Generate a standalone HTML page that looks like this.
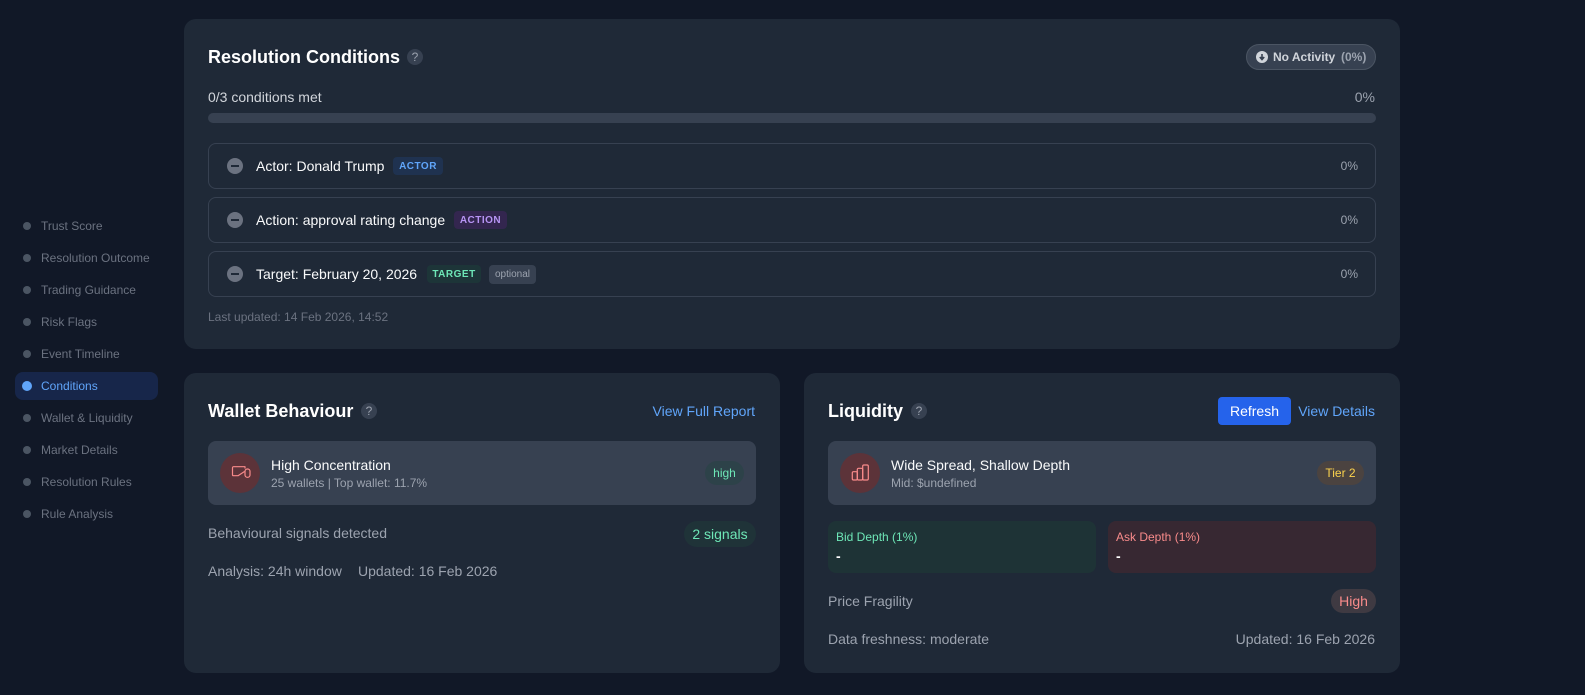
<!DOCTYPE html>
<html><head><meta charset="utf-8"><style>
html,body{margin:0;padding:0;width:1585px;height:695px;overflow:hidden;background:#111827;font-family:"Liberation Sans",sans-serif;color:#fff}
.a{position:absolute;white-space:nowrap}
.card{position:absolute;background:#1f2937;border-radius:12px}
.nav{position:absolute;left:41px;font-size:12px;line-height:16px;color:#6b7280}
.dot{position:absolute;left:23px;width:8px;height:8px;border-radius:50%;background:#4b5563}
h2{position:absolute;margin:0;font-size:18px;line-height:24px;font-weight:700;color:#fff;white-space:nowrap}
.q{position:absolute;width:16px;height:16px;border-radius:50%;background:#374151;color:#9ca3af;font-size:12px;line-height:16px;text-align:center}
.cond{position:absolute;left:208px;width:1166px;height:44px;border:1px solid #374151;border-radius:8px}
.mi{position:absolute;left:227px;width:16px;height:16px;border-radius:50%;background:#6b7280}
.mi:after{content:"";position:absolute;left:4px;top:7px;width:8px;height:2px;background:#1f2937}
.ct{position:absolute;left:256px;font-size:14px;line-height:20px;color:#f9fafb;white-space:nowrap}
.tag{position:absolute;height:18px;line-height:20px;font-size:10px;font-weight:700;letter-spacing:.5px;border-radius:4px;text-align:center}
.pc{position:absolute;right:227px;font-size:12px;line-height:16px;color:#9ca3af}
.box{position:absolute;top:441px;height:64px;background:#374151;border-radius:8px}
.ic{position:absolute;top:453px;width:40px;height:40px;border-radius:50%;background:#5c3339}
.pill{position:absolute;text-align:center;border-radius:12px;white-space:nowrap}
</style></head><body>

<div class="dot" style="top:222px"></div><div class="nav" style="top:218px">Trust Score</div>
<div class="dot" style="top:254px"></div><div class="nav" style="top:250px">Resolution Outcome</div>
<div class="dot" style="top:286px"></div><div class="nav" style="top:282px">Trading Guidance</div>
<div class="dot" style="top:318px"></div><div class="nav" style="top:314px">Risk Flags</div>
<div class="dot" style="top:350px"></div><div class="nav" style="top:346px">Event Timeline</div>
<div class="a" style="left:15px;top:372px;width:143px;height:28px;background:#17264a;border-radius:8px"></div>
<div class="dot" style="left:22px;top:381px;width:10px;height:10px;background:#60a5fa"></div><div class="nav" style="top:378px;color:#60a5fa">Conditions</div>
<div class="dot" style="top:414px"></div><div class="nav" style="top:410px">Wallet &amp; Liquidity</div>
<div class="dot" style="top:446px"></div><div class="nav" style="top:442px">Market Details</div>
<div class="dot" style="top:478px"></div><div class="nav" style="top:474px">Resolution Rules</div>
<div class="dot" style="top:510px"></div><div class="nav" style="top:506px">Rule Analysis</div>

<div class="card" style="left:184px;top:19px;width:1216px;height:330px"></div>
<h2 style="left:208px;top:45px">Resolution Conditions</h2>
<div class="q" style="left:407px;top:49px">?</div>
<div class="a" style="left:1246px;top:44px;width:128px;height:24px;background:#374151;border:1px solid #4b5563;border-radius:13px"></div>
<svg class="a" style="left:1256px;top:51px" width="12" height="12" viewBox="0 0 12 12"><circle cx="6" cy="6" r="6" fill="#d1d5db"/><path d="M6 3v5M3.8 6L6 8.500 8.200 6" stroke="#374151" stroke-width="1.600" fill="#374151"/></svg>
<div class="a" style="left:1273px;top:49px;font-size:12px;line-height:16px;font-weight:700;color:#d1d5db">No Activity</div>
<div class="a" style="left:1341px;top:49px;font-size:12px;line-height:16px;font-weight:700;color:#9ca3af">(0%)</div>

<div class="a" style="left:208px;top:87px;font-size:14px;line-height:20px;color:#d1d5db">0/3 conditions met</div>
<div class="a" style="right:210px;top:87px;font-size:14px;line-height:20px;color:#9ca3af">0%</div>
<div class="a" style="left:208px;top:113px;width:1168px;height:10px;border-radius:5px;background:#374151"></div>

<div class="cond" style="top:143px"></div>
<div class="mi" style="top:158px"></div>
<div class="ct" style="top:156px">Actor: Donald Trump</div>
<div class="tag" style="left:393px;top:157px;width:50px;color:#60a5fa;background:#1f3250">ACTOR</div>
<div class="pc" style="top:158px">0%</div>

<div class="cond" style="top:197px"></div>
<div class="mi" style="top:212px"></div>
<div class="ct" style="top:210px">Action: approval rating change</div>
<div class="tag" style="left:454px;top:211px;width:53px;color:#b794f4;background:#33264f">ACTION</div>
<div class="pc" style="top:212px">0%</div>

<div class="cond" style="top:251px"></div>
<div class="mi" style="top:266px"></div>
<div class="ct" style="top:264px">Target: February 20, 2026</div>
<div class="tag" style="left:427px;top:265px;width:54px;color:#6ee7b7;background:#1d3538">TARGET</div>
<div class="tag" style="left:489px;top:265px;width:47px;height:19px;line-height:19px;font-weight:400;letter-spacing:0;color:#9ca3af;background:#374151">optional</div>
<div class="pc" style="top:266px">0%</div>

<div class="a" style="left:208px;top:309px;font-size:12px;line-height:16px;color:#6b7280">Last updated: 14 Feb 2026, 14:52</div>

<div class="card" style="left:184px;top:373px;width:596px;height:300px"></div>
<h2 style="left:208px;top:399px">Wallet Behaviour</h2>
<div class="q" style="left:361px;top:403px">?</div>
<div class="a" style="right:830px;top:401px;font-size:14px;line-height:20px;color:#60a5fa">View Full Report</div>
<div class="box" style="left:208px;width:548px"></div>
<div class="ic" style="left:220px"></div>
<svg class="a" style="left:230px;top:463px" width="21" height="20" viewBox="0 0 21 20" fill="none" stroke="#f98b8b" stroke-width="1.200"><path d="M15 5.500V3.700H3.500a1 1 0 0 0-1 1V11.700a1 1 0 0 0 1 1H8L14.500 8.500" stroke-linejoin="round"/><rect x="15" y="6" width="5" height="8.300" rx="2.300"/></svg>
<div class="a" style="left:271px;top:455px;font-size:14px;line-height:20px;color:#f9fafb">High Concentration</div>
<div class="a" style="left:271px;top:475px;font-size:12px;line-height:16px;color:#9ca3af">25 wallets | Top wallet: 11.7%</div>
<div class="pill" style="left:705px;top:461px;width:39px;height:24px;line-height:24px;font-size:12px;color:#6ee7b7;background:#2d4249">high</div>
<div class="a" style="left:208px;top:523px;font-size:14px;line-height:20px;color:#9ca3af">Behavioural signals detected</div>
<div class="pill" style="left:684px;top:521px;width:72px;height:26px;line-height:26px;font-size:14px;color:#6ee7b7;background:#1f3338;border-radius:13px">2 signals</div>
<div class="a" style="left:208px;top:561px;font-size:14px;line-height:20px;color:#9ca3af">Analysis: 24h window</div>
<div class="a" style="left:358px;top:561px;font-size:14px;line-height:20px;color:#9ca3af">Updated: 16 Feb 2026</div>

<div class="card" style="left:804px;top:373px;width:596px;height:300px"></div>
<h2 style="left:828px;top:399px">Liquidity</h2>
<div class="q" style="left:911px;top:403px">?</div>
<div class="a" style="left:1218px;top:397px;width:73px;height:28px;line-height:28px;background:#2563eb;border-radius:4px;text-align:center;font-size:14px;color:#fff">Refresh</div>
<div class="a" style="right:210px;top:401px;font-size:14px;line-height:20px;color:#60a5fa">View Details</div>
<div class="box" style="left:828px;width:548px"></div>
<div class="ic" style="left:840px"></div>
<svg class="a" style="left:850px;top:463px" width="20" height="20" viewBox="0 0 20 20" fill="none" stroke="#f98b8b" stroke-width="1.200"><rect x="2.300" y="8.700" width="5" height="8.300" rx="1.200"/><rect x="7.300" y="5.300" width="5.400" height="11.700" rx="1.200"/><rect x="12.700" y="2" width="5.600" height="15" rx="1.200"/></svg>
<div class="a" style="left:891px;top:455px;font-size:14px;line-height:20px;color:#f9fafb">Wide Spread, Shallow Depth</div>
<div class="a" style="left:891px;top:475px;font-size:12px;line-height:16px;color:#9ca3af">Mid: $undefined</div>
<div class="pill" style="left:1317px;top:461px;width:47px;height:24px;line-height:24px;font-size:12px;color:#fcd34d;background:#4b4340">Tier 2</div>
<div class="a" style="left:828px;top:521px;width:268px;height:52px;background:#1e3336;border-radius:8px"></div>
<div class="a" style="left:836px;top:529px;font-size:12px;line-height:16px;color:#6ee7b7">Bid Depth (1%)</div>
<div class="a" style="left:836px;top:546px;font-size:14px;line-height:20px;font-weight:700;color:#fff">-</div>
<div class="a" style="left:1108px;top:521px;width:268px;height:52px;background:#372832;border-radius:8px"></div>
<div class="a" style="left:1116px;top:529px;font-size:12px;line-height:16px;color:#f98b8b">Ask Depth (1%)</div>
<div class="a" style="left:1116px;top:546px;font-size:14px;line-height:20px;font-weight:700;color:#fff">-</div>
<div class="a" style="left:828px;top:591px;font-size:14px;line-height:20px;color:#9ca3af">Price Fragility</div>
<div class="pill" style="left:1331px;top:589px;width:45px;height:24px;line-height:24px;font-size:14px;color:#f98b8b;background:#3f3a42">High</div>
<div class="a" style="left:828px;top:629px;font-size:14px;line-height:20px;color:#9ca3af">Data freshness: moderate</div>
<div class="a" style="right:210px;top:629px;font-size:14px;line-height:20px;color:#9ca3af">Updated: 16 Feb 2026</div>
</body></html>
